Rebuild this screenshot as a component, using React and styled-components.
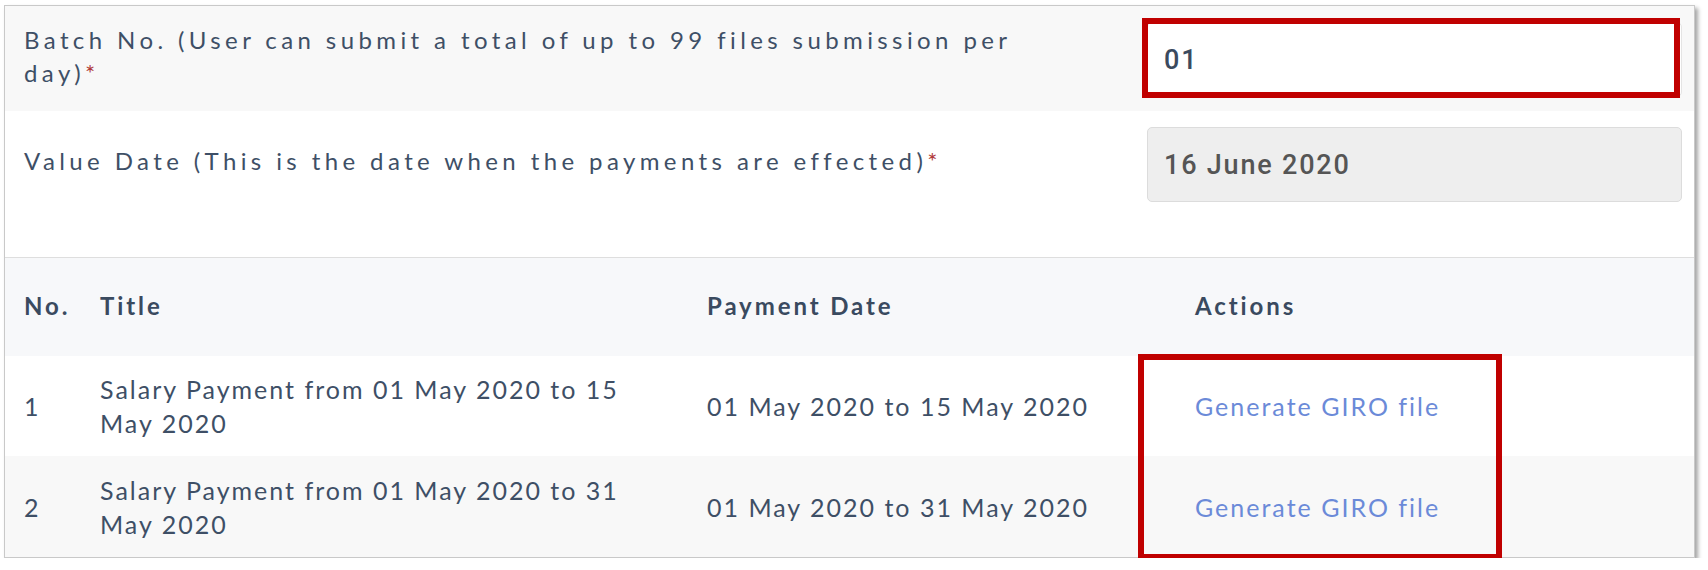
import React from "react";
import styled, { createGlobalStyle } from "styled-components";

const GlobalStyle = createGlobalStyle`
  html, body {
    margin: 0;
    padding: 0;
    background: #fff;
  }
  body {
    font-family: "Lato", "Liberation Sans", sans-serif;
    color: #3e4f66;
  }
  * {
    box-sizing: border-box;
  }
`;

const payments = [
  {
    no: 1,
    title: "Salary Payment from 01 May 2020 to 15 May 2020",
    date: "01 May 2020 to 15 May 2020",
  },
  {
    no: 2,
    title: "Salary Payment from 01 May 2020 to 31 May 2020",
    date: "01 May 2020 to 31 May 2020",
  },
];

export default function App() {
  return (
    <>
      <GlobalStyle />
      <Page>
        <Panel>
          <FormRow $bg="#f8f8f8" $height={105}>
            <LabelCell>
              <Label>
                Batch No. (User can submit a total of up to 99 files submission
                per day)<Req>*</Req>
              </Label>
            </LabelCell>
            <FieldCell>
              <Input value="01" readOnly />
            </FieldCell>
          </FormRow>

          <FormRow $bg="#ffffff" $height={146}>
            <LabelCell>
              <Label>
                Value Date (This is the date when the payments are effected)
                <Req>*</Req>
              </Label>
            </LabelCell>
            <FieldCell>
              <Input value="16 June 2020" disabled $disabled />
            </FieldCell>
          </FormRow>

          <Table>
            <HeadRow>
              <HeadCell>No.</HeadCell>
              <HeadCell>Title</HeadCell>
              <HeadCell>Payment Date</HeadCell>
              <HeadCell>Actions</HeadCell>
            </HeadRow>
            {payments.map((p, i) => (
              <BodyRow key={p.no} $striped={i % 2 === 1}>
                <Cell>{p.no}</Cell>
                <Cell>{p.title}</Cell>
                <Cell>{p.date}</Cell>
                <Cell>
                  <ActionLink href="#">Generate GIRO file</ActionLink>
                </Cell>
              </BodyRow>
            ))}
          </Table>

          {/* annotation boxes drawn over the screenshot */}
          <Highlight $left={1137} $top={12} $w={538} $h={80} />
          <Highlight $left={1133} $top={348} $w={364} $h={206} />
        </Panel>
      </Page>
    </>
  );
}

const Page = styled.div`
  padding: 5px 0 0 4px;
`;

const Panel = styled.div`
  position: relative;
  width: 1691px;
  background: #fff;
  border: 1px solid #c9c9c9;
  box-shadow: 3px 3px 4px rgba(0, 0, 0, 0.35);
`;

const FormRow = styled.div`
  display: flex;
  align-items: flex-start;
  height: ${(p) => p.$height}px;
  padding-top: 16px;
  background: ${(p) => p.$bg};
`;

const LabelCell = styled.div`
  flex: 0 0 1125px;
  min-height: 75px;
  padding: 0 70px 8px 19px;
  display: flex;
  align-items: center;
`;

const Label = styled.label`
  font-size: 24px;
  line-height: 33px;
  letter-spacing: 4.4px;
  color: #3e4f66;
`;

const Req = styled.span`
  color: #b03a3a;
  letter-spacing: 0;
`;

const FieldCell = styled.div`
  flex: 1;
  padding: 0 12px 0 17px;
`;

const Input = styled.input`
  display: block;
  width: 100%;
  height: 75px;
  padding: 0 16px;
  border: 1px solid ${(p) => (p.$disabled ? "#dcdcdc" : "#e4e4e4")};
  border-radius: 5px;
  background: ${(p) => (p.$disabled ? "#eeeeee" : "#ffffff")};
  font-family: "Roboto", "Liberation Sans", sans-serif;
  font-size: 27px;
  font-weight: 500;
  letter-spacing: 1.8px;
  color: ${(p) => (p.$disabled ? "#555555" : "#3b4a5e")};
  -webkit-text-fill-color: ${(p) => (p.$disabled ? "#555555" : "#3b4a5e")};
  opacity: 1;
  outline: none;
`;

const Table = styled.div`
  border-top: 1px solid #dedede;
`;

const GridRow = styled.div`
  display: grid;
  grid-template-columns: 76px 607px 488px 1fr;
`;

const HeadRow = styled(GridRow)`
  height: 98px;
  background: #f7f8fa;
`;

const BodyRow = styled(GridRow)`
  height: ${(p) => (p.$striped ? 101 : 100)}px;
  background: ${(p) => (p.$striped ? "#f8f8f8" : "#ffffff")};
`;

const HeadCell = styled.div`
  display: flex;
  align-items: center;
  padding: 0 19px 4px;
  font-size: 24px;
  font-weight: 700;
  letter-spacing: 2.9px;
  color: #3a4a5f;
`;

const Cell = styled.div`
  display: flex;
  align-items: center;
  padding: 0 19px;
  font-size: 25px;
  line-height: 34px;
  letter-spacing: 2px;
  color: #3e4f66;
`;

const ActionLink = styled.a`
  color: #6b8ad8;
  text-decoration: none;
  letter-spacing: 2px;
`;

const Highlight = styled.div`
  position: absolute;
  left: ${(p) => p.$left}px;
  top: ${(p) => p.$top}px;
  width: ${(p) => p.$w}px;
  height: ${(p) => p.$h}px;
  border: 6px solid #c00000;
  pointer-events: none;
`;
